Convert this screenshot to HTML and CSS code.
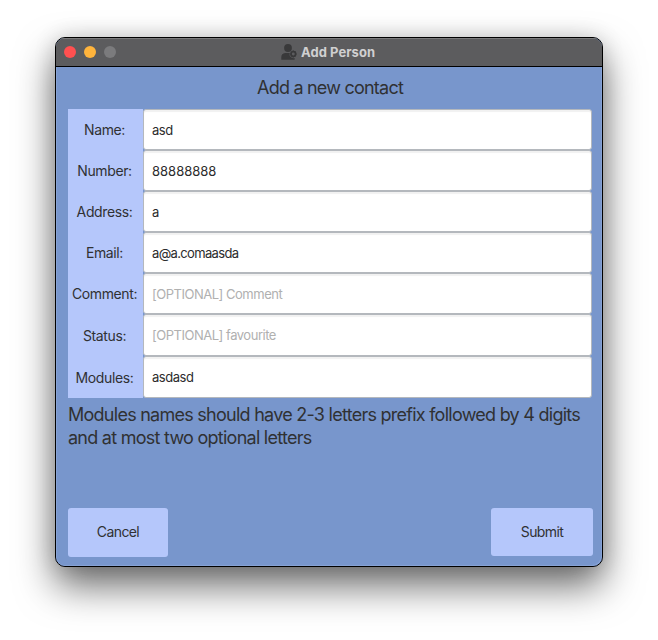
FILE: index.html
```html
<!DOCTYPE html>
<html lang="en">
<head>
<meta charset="utf-8">
<title>Add Person</title>
<link rel="stylesheet" href="styles.css">
</head>
<body>
<main class="window">
  <header class="titlebar">
    <div class="lights"><i class="light close"></i><i class="light minimize"></i><i class="light zoom"></i></div>
    <svg class="person" viewBox="0 0 16 16" width="16" height="16">
      <circle cx="7" cy="4" r="3.9"/>
      <path d="M0.3 15.8V13.2Q0.3 9.2 4.2 8.9H8.7Q7.6 13.2 12.3 14.2L13.6 14V15.8Z"/>
      <circle class="cog" cx="12.3" cy="10" r="2.3"/>
      <path class="teeth" d="M12.3 6.6v1.2M12.3 12.2v1.2M8.9 10h1.2M14.5 10h1.2M9.9 7.6l.8.8M13.9 11.6l.8.8M9.9 12.4l.8-.8M13.9 8.4l.8-.8"/>
    </svg>
    <span class="title">Add Person</span>
  </header>
  <section class="content">
    <h1 class="heading"><span>Add a new contact</span></h1>
    <form class="form">
      <label class="label" for="name">Name:</label><input class="field" id="name" value="asd">
      <label class="label" for="number">Number:</label><input class="field digits" id="number" value="88888888">
      <label class="label" for="address">Address:</label><input class="field" id="address" value="a">
      <label class="label" for="email">Email:</label><input class="field email" id="email" value="a@a.comaasda">
      <label class="label" for="comment">Comment:</label><input class="field" id="comment" placeholder="[OPTIONAL] Comment">
      <label class="label low" for="status">Status:</label><input class="field" id="status" placeholder="[OPTIONAL] favourite">
      <label class="label low" for="modules">Modules:</label><input class="field" id="modules" value="asdasd">
    </form>
    <p class="message">Modules names should have 2-3 letters prefix followed by 4 digits<br>and at most two optional letters</p>
    <footer class="actions">
      <button class="button cancel" type="button">Cancel</button>
      <button class="button submit" type="button">Submit</button>
    </footer>
  </section>
</main>
</body>
</html>
```
FILE: styles.css
```css
* { box-sizing: border-box; }

body {
  margin: 0;
  height: 640px;
  padding: 37px 55px 0;
  overflow: hidden;
  background: #fff;
  color: #303133;
  font-family: Inter, "Liberation Sans", sans-serif;
}

.window {
  width: 548px;
  height: 530px;
  display: flex;
  flex-direction: column;
  overflow: hidden;
  border: 1px solid #000;
  border-radius: 10px;
  background: #7896cc;
  box-shadow: 0 19px 38px rgba(0, 0, 0, .58), 0 0 22px rgba(0, 0, 0, .14);
}

.titlebar {
  height: 29px;
  flex: none;
  display: grid;
  grid-template-columns: 225px 16px auto;
  align-items: center;
  background: #5c5c5e;
  border-bottom: 1px solid #000;
  box-shadow: inset 0 1px #7b7b7c;
}

.lights { display: flex; gap: 8px; padding-left: 8px; }
.light { width: 12px; height: 12px; border-radius: 50%; }
.close { background: #ff5050; }
.minimize { background: #ffb43c; }
.zoom { background: #7b7b7d; }

.person { display: block; margin-top: -1px; fill: #39393a; }
.cog { fill: none; stroke: #39393a; stroke-width: 1.7; }
.teeth { fill: none; stroke: #39393a; stroke-width: 1.2; }

.title {
  padding: 0 0 1px 4px;
  color: #d0d0d1;
  font-size: 13px;
  font-weight: 700;
  line-height: 16px;
  letter-spacing: .05px;
  white-space: nowrap;
}

.content {
  flex: 1;
  display: flex;
  flex-direction: column;
  padding: 0 9px 9px 12px;
  box-shadow: inset 1px 0 #86a2d5, inset -1px -1px #86a2d5;
  border-radius: 0 0 9px 9px;
}

.heading {
  margin: 0;
  height: 42px;
  padding-right: 1px;
  line-height: 41px;
  text-align: center;
  font-size: 18px;
  font-weight: 400;
  letter-spacing: -.78px;
}

.form {
  width: 524px;
  display: grid;
  grid-template-columns: 75px 449px;
  grid-template-rows: repeat(5, 41px) repeat(2, 42px);
}

.label {
  display: flex;
  align-items: center;
  justify-content: center;
  padding: 0 2px 1px 0;
  background: #b5c7fb;
  font-size: 14px;
  letter-spacing: -.38px;
}
.low { padding: 1px 2px 0 0; }

.field {
  width: 449px;
  height: 100%;
  margin: 0;
  padding: 0 8px;
  border: 1px solid #b4b8bd;
  border-radius: 3px;
  outline: 0;
  background: #fff;
  box-shadow: inset 0 2px 1px #f1f1f1;
  color: #2c2c2d;
  font: 13px Inter, "Liberation Sans", sans-serif;
  letter-spacing: -.48px;
}
.digits { letter-spacing: 0; }
.email { letter-spacing: -.65px; }
.field::placeholder { color: #b0b0b0; opacity: 1; }

.message {
  flex: 1;
  margin: 0;
  padding-top: 5px;
  font-size: 18px;
  line-height: 23px;
  letter-spacing: -.74px;
  white-space: nowrap;
}

.actions { display: flex; justify-content: space-between; align-items: flex-start; }

.button {
  height: 49px;
  margin: 0;
  padding: 0 0 2px;
  border: 0;
  border-radius: 3px;
  background: #b5c7fb;
  color: #303133;
  font: 14px Inter, "Liberation Sans", sans-serif;
  letter-spacing: -.6px;
}
.cancel { width: 100px; }
.submit { width: 102px; height: 48px; padding-bottom: 1px; }
```
